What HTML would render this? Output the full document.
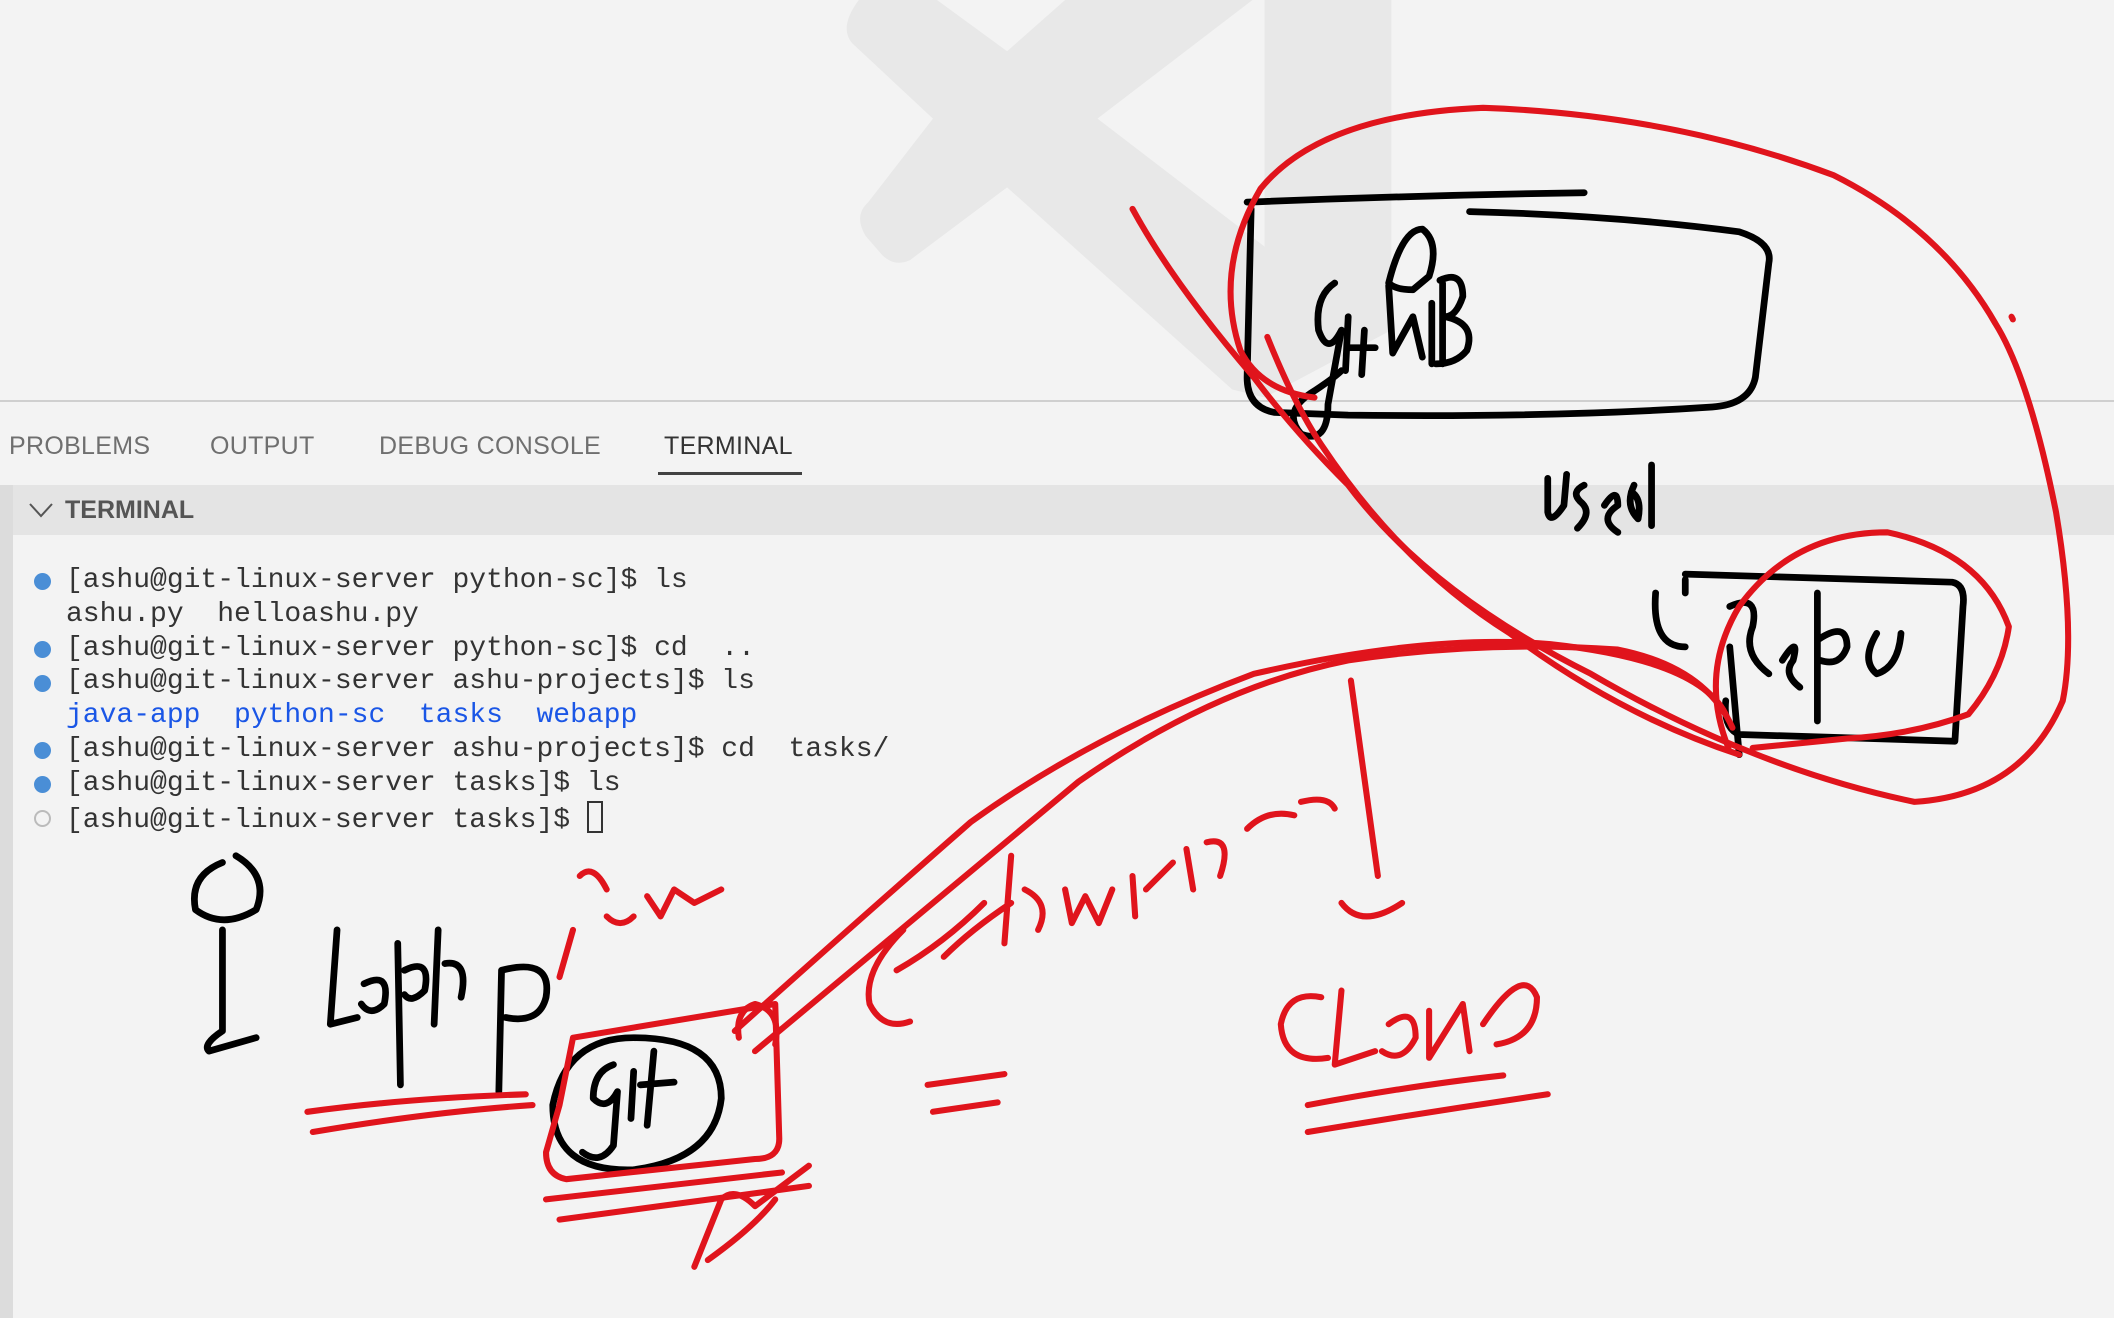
<!DOCTYPE html>
<html><head><meta charset="utf-8"><style>
html,body{margin:0;padding:0}
body{width:2114px;height:1318px;background:#f3f3f3;position:relative;overflow:hidden;font-family:"Liberation Sans",sans-serif}
.tabs{position:absolute;top:400px;left:0;right:0;height:84px;border-top:2px solid #cfcfcf;background:#f3f3f3}
.tab{position:absolute;top:30px;font-size:25px;color:#6f6f6f;letter-spacing:0.3px}
.ul{position:absolute;left:658px;top:70px;width:144px;height:3px;background:#424242}
.lb{position:absolute;left:0;top:485px;width:13px;bottom:0;background:#dcdcdc}
.hdr{position:absolute;left:13px;right:0;top:485px;height:50px;background:#e4e4e4}
.hdr span{position:absolute;left:52px;top:11px;font-size:25px;font-weight:bold;color:#555}
.term{position:absolute;left:66px;top:564px;font-family:"Liberation Mono",monospace;font-size:28px;line-height:33.8px;color:#333;white-space:pre}
.dot{position:absolute;left:34px;width:17px;height:17px;border-radius:50%;background:#4a8ed6}
.b{color:#1a56e6}
</style></head><body>
<svg style="position:absolute;left:0;top:0" width="2114" height="1318" viewBox="0 0 1568 978" preserveAspectRatio="none">
<path d="M637 0 L695 0 L747 38 L790 0 L929 0 L814 88 L938 183 L938 0 L1032 0 L1032 245 L938 295 L914 289 L747 139 L675 193 Q664 198 655 190 L642 175 Q633 160 644 150 L692 88 L632 32 Q622 20 637 0 Z" fill="#e8e8e8"/>
</svg>
<div class="tabs">
<div class="tab" style="left:9px">PROBLEMS</div>
<div class="tab" style="left:210px">OUTPUT</div>
<div class="tab" style="left:379px">DEBUG CONSOLE</div>
<div class="tab" style="left:664px;color:#333">TERMINAL</div>
<div class="ul"></div>
</div>
<div class="lb"></div>
<div class="hdr"><svg style="position:absolute;left:15px;top:16px" width="26" height="18"><path d="M2 3 L13 15 L24 3" fill="none" stroke="#555" stroke-width="2"/></svg><span>TERMINAL</span></div>
<div class="dot" style="top:573px"></div>
<div class="dot" style="top:641px"></div>
<div class="dot" style="top:675px"></div>
<div class="dot" style="top:742px"></div>
<div class="dot" style="top:776px"></div>
<div class="dot" style="top:810px;background:none;border:2px solid #bbb;width:13px;height:13px"></div>
<div class="term">[ashu@git-linux-server python-sc]$ ls
ashu.py  helloashu.py
[ashu@git-linux-server python-sc]$ cd  ..
[ashu@git-linux-server ashu-projects]$ ls
<span class="b">java-app  python-sc  tasks  webapp</span>
[ashu@git-linux-server ashu-projects]$ cd  tasks/
[ashu@git-linux-server tasks]$ ls
[ashu@git-linux-server tasks]$ <span style="display:inline-block;width:12px;height:28px;border:2px solid #333;vertical-align:-6px"></span></div>
<svg style="position:absolute;left:0;top:0" width="2114" height="1318" viewBox="0 0 1568 978" preserveAspectRatio="none" fill="none" stroke-linecap="round" stroke-linejoin="round">
<g stroke="#000" stroke-width="5">
<path d="M925 150 Q1050 145 1175 143"/>
<path d="M1090 157 Q1200 160 1290 172 Q1315 180 1312 195 L1302 280 Q1298 300 1270 302 Q1150 310 1000 308 L945 306 Q925 302 925 280 L928 155"/>
<path d="M990 210 Q975 220 978 245 Q985 265 995 245 L985 300 Q985 330 965 322 Q950 305 975 290 Q990 280 995 275"/>
<path d="M1000 235 L998 275 M1012 245 L1010 278 M1000 258 L1020 258"/>
<path d="M1030 210 Q1040 170 1055 170 Q1068 180 1060 205 L1048 215 Q1035 215 1030 210 M1030 212 L1033 262 L1048 235 L1055 265 M1062 225 L1062 270"/>
<path d="M1068 208 Q1085 200 1085 220 Q1080 235 1072 235 Q1095 240 1088 260 Q1080 270 1065 270 M1070 210 L1070 270"/>
<path d="M1148 355 L1148 380 Q1150 390 1160 375 L1162 352 M1175 360 Q1165 365 1172 372 Q1182 380 1170 392 M1190 375 Q1200 360 1200 375 Q1185 385 1200 395 M1212 360 Q1205 375 1215 385 Q1218 370 1210 365 M1225 345 L1225 390"/>
<path d="M1250 426 L1448 432 Q1458 434 1456 450 L1450 550 L1290 545 Q1278 540 1280 520 M1250 430 L1250 440 M1228 440 Q1225 480 1250 480"/>
<path d="M1283 480 L1290 560 M1283 450 Q1305 440 1300 465 Q1292 485 1312 500 M1322 490 Q1335 470 1330 490 Q1322 500 1335 510 M1348 440 L1348 535 M1348 475 Q1370 460 1370 480 Q1365 495 1350 490 M1392 470 Q1380 490 1392 500 Q1408 495 1410 470"/>
<path d="M165 640 Q140 650 145 675 Q165 690 190 675 Q200 650 175 635 M165 690 L165 765 Q150 775 155 780 L190 770"/>
<path d="M250 690 L245 760 L265 755 M270 730 Q290 720 285 745 Q275 755 268 745 M295 700 L297 805 M300 720 Q320 710 315 735 Q305 745 300 738 M325 690 L322 760 M330 715 Q348 712 342 740 M372 720 L370 810 M372 720 Q410 710 405 740 Q400 760 375 755"/>
<path d="M470 770 Q420 770 410 820 Q410 870 470 868 Q530 860 535 815 Q535 770 470 770 M455 790 Q440 795 440 815 Q450 825 458 810 L455 850 Q445 865 432 855 M470 795 L468 830 M485 780 L480 835 M475 805 L500 803"/>
</g>
<g stroke="#e0141c" stroke-width="4.5">
<path d="M840 155 Q870 210 930 280 Q960 320 1000 360 Q1060 440 1180 500 Q1300 570 1420 595 Q1500 590 1530 520 Q1540 470 1525 380 Q1505 280 1480 240 Q1440 170 1360 130 Q1240 85 1100 80 Q980 85 935 140 Q900 200 920 260 Q935 290 975 295"/>
<path d="M940 250 Q960 300 980 330 Q1040 420 1120 470 Q1200 530 1290 560"/>
<path d="M1282 555 Q1260 500 1290 450 Q1330 395 1400 395 Q1470 410 1490 465 Q1485 500 1460 530 Q1420 545 1370 548 L1300 555"/>
<path d="M545 765 Q640 680 720 610 Q810 545 930 500 Q1060 470 1150 478 Q1260 490 1280 530"/>
<path d="M560 780 Q680 680 800 580 Q900 510 1000 490 Q1100 475 1200 482 Q1265 495 1285 540"/>
<path d="M1002 505 L1022 650 M995 670 Q1010 690 1040 670"/>
<path d="M670 690 Q640 720 645 745 Q655 765 675 758 M665 720 Q700 700 730 670 M700 710 Q720 690 750 670 M750 635 L745 700 M760 660 Q780 670 770 690 M790 660 L795 685 L805 665 L815 685 L825 660 M840 650 L842 680 M850 660 L870 640 M880 630 L885 660 M895 625 Q915 620 905 650 M925 615 Q940 600 960 605 M965 595 Q985 590 990 600"/>
<path d="M688 805 L745 797 M692 825 L740 818"/>
<path d="M980 740 Q955 735 950 760 Q952 790 985 785 M995 735 L990 790 L1020 780 M1030 760 Q1050 745 1050 770 Q1040 790 1025 780 M1060 750 L1060 785 L1085 745 L1090 780 M1100 760 Q1130 715 1140 740 Q1140 770 1110 775"/>
<path d="M970 820 Q1050 805 1115 798 M970 840 Q1060 825 1148 812"/>
<path d="M425 690 L415 725 M430 650 Q440 640 450 660 M450 680 Q460 690 470 680 M480 665 L490 680 L500 660 L515 670 L535 660"/>
<path d="M228 825 Q300 815 390 812 M232 840 Q320 825 395 820"/>
<path d="M425 770 L575 745 L578 845 Q578 860 560 860 L420 875 Q405 872 405 855 L415 820 Z"/>
<path d="M548 770 Q545 750 560 745 Q580 750 575 775"/>
<path d="M405 890 L580 870 M415 905 L600 880 M515 940 L535 890 Q545 880 560 895 L600 865 M525 935 Q560 910 575 890"/>
<path d="M1492 235 L1493 237"/>
</g>
</svg>
</body></html>
